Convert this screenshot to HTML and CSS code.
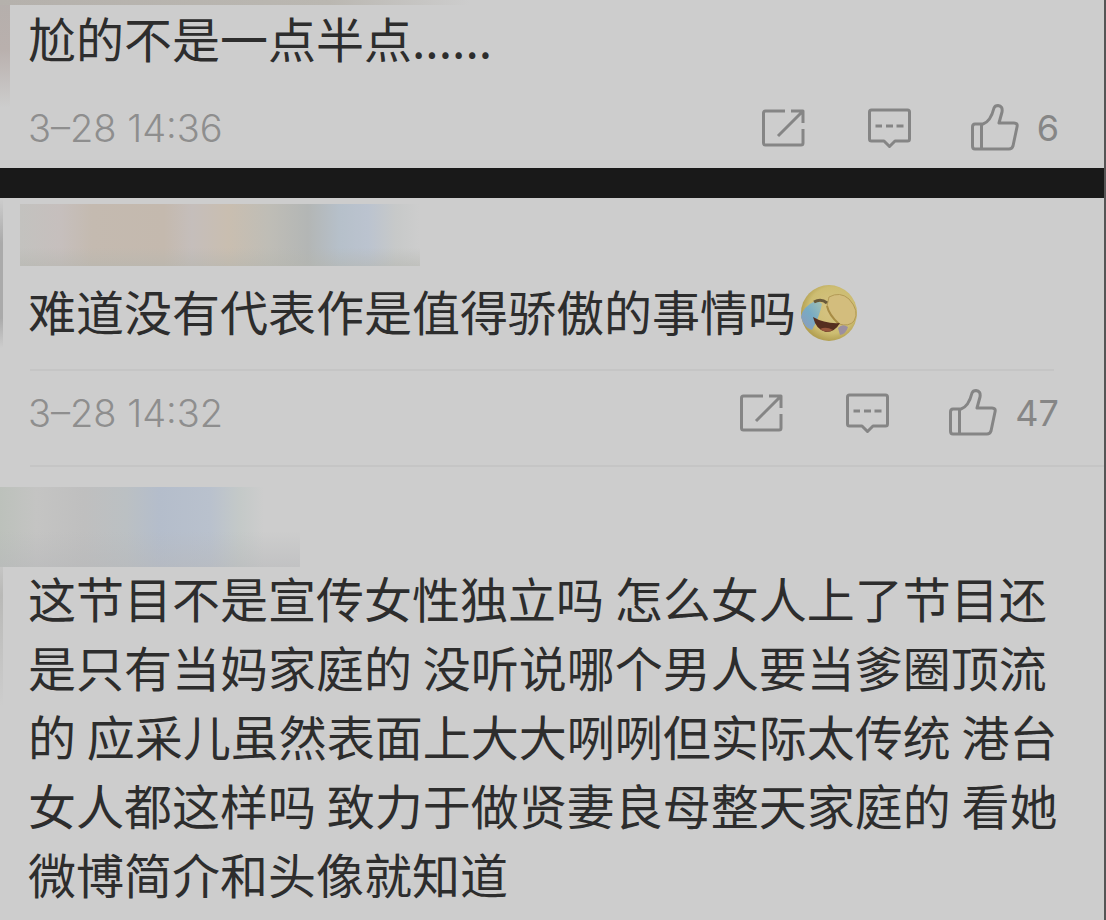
FILE: index.html
```html
<!DOCTYPE html>
<html lang="zh-CN">
<head>
<meta charset="utf-8">
<meta name="viewport" content="width=device-width, initial-scale=1">
<title>评论</title>
<link rel="stylesheet" href="styles.css">
</head>
<body>
<svg class="sprite" aria-hidden="true">
  <symbol id="share" viewBox="0 0 48 48">
    <path d="M26 7H6.500Q4.500 7 4.500 9V39Q4.500 41 6.500 41H42Q44 41 44 39V25M32 7H44V19M43 8L19 32"/>
  </symbol>
  <symbol id="comment" viewBox="0 0 48 48">
    <path d="M6.500 6H42.500Q44.500 6 44.500 8V35Q44.500 37 42.500 37H30L24.500 42.500L19 37H6.500Q4.500 37 4.500 35V8Q4.500 6 6.500 6Z"/>
    <path d="M10.500 22H17M21 22H28M31.500 22H38.500"/>
  </symbol>
  <symbol id="like" viewBox="0 0 48 48">
    <path d="M4 20H12C18 18 21 12 23 4Q24 1.500 27 1.500Q32 2 31 8L28 19H43Q47 19 46 23L42 42Q41 45 38 45H4Q1.500 45 1.500 42V23Q1.500 20 4 20ZM10.500 20.500V45"/>
  </symbol>
</svg>
<main class="feed">
  <article class="card card-first">
    <p class="text">尬的不是一点半点......</p>
    <footer class="meta">
      <time class="date" datetime="03-28T14:36">3–28 14:36</time>
      <div class="actions">
        <button class="action" type="button" aria-label="转发"><svg class="icon"><use href="#share"/></svg></button>
        <button class="action" type="button" aria-label="评论"><svg class="icon"><use href="#comment"/></svg></button>
        <button class="action" type="button" aria-label="赞 6"><svg class="icon"><use href="#like"/></svg><span class="count">6</span></button>
      </div>
    </footer>
  </article>
  <article class="card card-second">
    <div class="mask mask-warm"></div>
    <p class="text">难道没有代表作是值得骄傲的事情吗<svg class="emoji" viewBox="0 0 58 58" role="img" aria-label="笑哭">
      <defs>
        <radialGradient id="face" cx=".55" cy=".45" r=".55"><stop offset="0" stop-color="#d6c384"/><stop offset=".75" stop-color="#cdbd72"/><stop offset="1" stop-color="#b3a052"/></radialGradient>
        <linearGradient id="tear" x1="0" y1="1" x2="1" y2="0"><stop offset="0" stop-color="#8f99ba"/><stop offset=".5" stop-color="#77abc4"/><stop offset="1" stop-color="#a6c2b2"/></linearGradient>
      </defs>
      <circle cx="29" cy="29" r="28" fill="url(#face)"/>
      <path d="M17 16Q2 23 1 33Q4 44 12 46Q19 34 22 20Z" fill="url(#tear)"/>
      <path d="M29 13Q40 7 49 15Q60 27 54 37Q49 43 39 40Q29 31 27 22Z" fill="#d3bd7d" stroke="#b39a55"/>
      <path d="M27 22Q29 31 39 40" fill="none" stroke="#a88c45" stroke-width="2"/>
      <path d="M14 18Q21 14 27 19" fill="none" stroke="#67583a" stroke-width="3"/>
      <path d="M13 33Q25 40 40 39Q35 48 26 48Q16 46 13 33Z" fill="#552f20"/>
      <path d="M20 45Q26 42 33 46Q26 50 20 45Z" fill="#96563c"/>
      <path d="M38 44Q42 39 48 43Q46 50 40 51Z" fill="#9b8fa0"/>
    </svg></p>
    <hr class="rule rule-inset">
    <footer class="meta">
      <time class="date" datetime="03-28T14:32">3–28 14:32</time>
      <div class="actions">
        <button class="action" type="button" aria-label="转发"><svg class="icon"><use href="#share"/></svg></button>
        <button class="action" type="button" aria-label="评论"><svg class="icon"><use href="#comment"/></svg></button>
        <button class="action" type="button" aria-label="赞 47"><svg class="icon"><use href="#like"/></svg><span class="count">47</span></button>
      </div>
    </footer>
    <hr class="rule">
  </article>
  <article class="card card-third">
    <div class="mask mask-cool"></div>
    <p class="text">这节目不是宣传女性独立吗 怎么女人上了节目还是只有当妈家庭的 没听说哪个男人要当爹圈顶流的 应采儿虽然表面上大大咧咧但实际太传统 港台女人都这样吗 致力于做贤妻良母整天家庭的 看她微博简介和头像就知道</p>
  </article>
</main>
</body>
</html>
```
FILE: styles.css
```css
* {
  box-sizing: border-box;
}

body {
  margin: 0;
  background: #cdcdcd;
  color: #2d2d2d;
  font-family: "Noto Sans CJK SC", "Noto Sans", sans-serif;
}

.sprite {
  display: none;
}

.feed {
  min-height: 100vh;
  border-right: 2px solid #555;
}

.card {
  display: flow-root;
}

.card-first {
  padding: 3px 0 16px;
  border-bottom: 30px solid #191919;
  background:
    linear-gradient(90deg, #b5b1ac, #bab7b1 70%, #cdcdcd) 0 0 / 470px 5px no-repeat,
    linear-gradient(#b5afac, #b9b0ad 45%, #cdcdcd) 0 0 / 10px 108px no-repeat;
}

.card-second {
  padding-top: 6px;
  background: linear-gradient(#cdcdcd, #aaa 30%, #aaa 80%, #cdcdcd) 0 0 / 3px 150px no-repeat;
}

.card-third {
  padding-top: 20px;
  background: linear-gradient(#cdcdcd, #b9b9b7 30%, #cdcdcd) 0 80px / 3px 160px no-repeat;
}

.text {
  margin: 0;
  padding: 0 44px 0 28px;
  font-size: 48px;
  line-height: 69px;
}

.emoji {
  width: 58px;
  height: 58px;
  margin-left: 4px;
  vertical-align: -11px;
}

.meta {
  display: flex;
  align-items: center;
  justify-content: space-between;
  height: 48px;
  padding: 0 45px 0 28px;
  color: #868686;
  font-family: Inter, "Liberation Sans", sans-serif;
  font-size: 36px;
}

.card-first .meta {
  margin-top: 32px;
}

.date {
  color: #8e8e8e;
  font-size: 38px;
  font-weight: 300;
}

.actions {
  display: flex;
  align-items: center;
  gap: 58px;
}

.action {
  display: flex;
  align-items: center;
  gap: 18px;
  padding: 0;
  border: 0;
  background: none;
  color: inherit;
  font: inherit;
}

.icon {
  width: 48px;
  height: 48px;
  fill: none;
  stroke: #858585;
  stroke-width: 3;
  stroke-linejoin: round;
}

.rule {
  height: 2px;
  margin: 28px 0 0 30px;
  border: 0;
  background: #c5c5c5;
}

.rule-inset {
  margin: 24px 50px 18px 30px;
}

.mask-warm {
  width: 400px;
  height: 62px;
  margin: 0 0 10px 20px;
  background:
    linear-gradient(transparent 70%, #b4b5ae80),
    linear-gradient(90deg, #c3c2bf, #c6bfbd 10%, #c4bab0 18%, #c4b9ae 36%, #c5bebb 43%, #c9beb0 52%, #bfbdb6 62%, #b3b6b5 72%, #b6c0ca 80%, #bbc3cf 87%, #c7c9c9 94%, #cdcdcd);
}

.mask-cool {
  width: 300px;
  height: 80px;
  margin-bottom: -4px;
  background:
    linear-gradient(transparent 55%, #b6b7b980),
    linear-gradient(90deg, #bcc1bb, #c4c4c3 12%, #bfbfbf 28%, #bbc0c3 42%, #b4bdcb 53%, #b9c1cd 70%, #c4c9c8 80%, #cdcdcd 88%);
}
```
